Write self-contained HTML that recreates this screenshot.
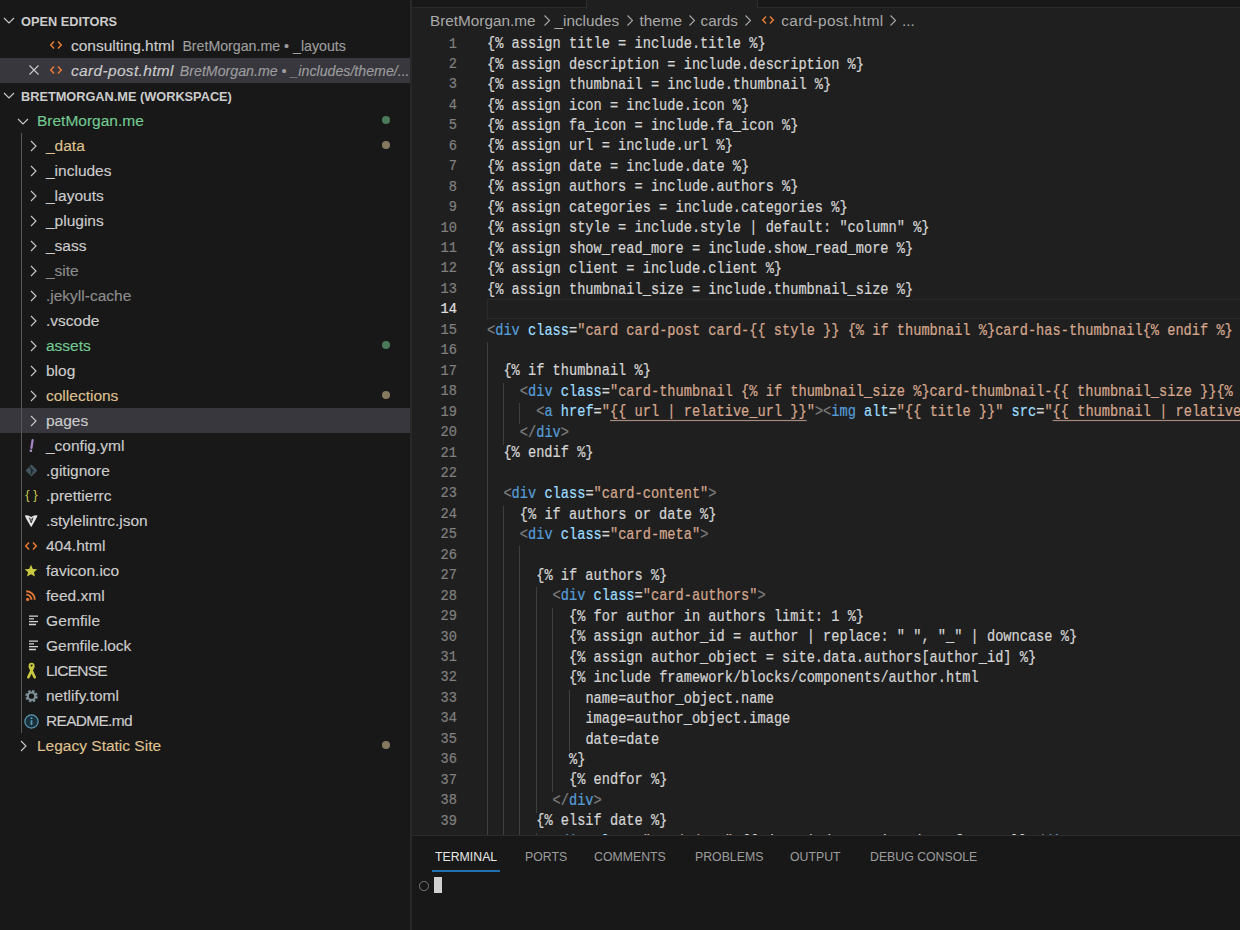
<!DOCTYPE html><html><head><meta charset="utf-8"><style>
*{margin:0;padding:0;box-sizing:border-box}
html,body{width:1240px;height:930px;overflow:hidden;background:#1f1f1f}
body{position:relative;font-family:"Liberation Sans",sans-serif}
#side{position:absolute;left:0;top:0;width:410px;height:930px;background:#181818;overflow:hidden}
#sideborder{position:absolute;left:410px;top:0;width:2px;height:930px;background:#282828}
.row{position:absolute;left:0;width:410px;height:25px}
.ic{position:absolute;overflow:visible}
.hd{position:absolute;top:0.5px;line-height:25px;font-size:12.75px;font-weight:bold;color:#cccccc;white-space:nowrap}
.tx{position:absolute;top:-0.5px;line-height:25px;font-size:15.5px;-webkit-text-stroke:0.15px currentColor;color:#cccccc;white-space:nowrap}
.desc{font-size:14.2px;color:#9d9d9d;margin-left:8px}
.bc{position:absolute;top:8px;height:26px;line-height:26px;font-size:15.3px;color:#a9a9a9;white-space:nowrap}
.dot{position:absolute;left:382px;top:8px;width:8px;height:8px;border-radius:50%}
#editor{position:absolute;left:412px;top:0;width:828px;height:835px;background:#1f1f1f;overflow:hidden}
.cl{position:absolute;height:20.45px;line-height:20.45px;font-family:"Liberation Mono",monospace;font-size:13.67px;white-space:pre;color:#d4d4d4;transform:scaleY(1.16);-webkit-text-stroke:0.2px currentColor}
.ln{position:absolute;left:412px;width:45px;text-align:right;height:20.45px;line-height:20.45px;font-family:"Liberation Mono",monospace;font-size:13.67px;transform:scaleY(1.12);-webkit-text-stroke:0.2px currentColor}
.ig{position:absolute;width:1.2px;height:20.95px;background:#404040}
#panel{position:absolute;left:412px;top:835px;width:828px;height:95px;background:#181818;border-top:1px solid #2b2b2b}
.pt{position:absolute;top:846.7px;line-height:20px;font-size:12.3px;color:#9d9d9d;white-space:nowrap}
</style></head><body>
<div id="side"><div class="row" style="top:8px;"><svg class="ic" style="left:2px;top:5px" width="14" height="14" viewBox="0 0 14 14"><path d="M2 5 L7 10 L12 5" fill="none" stroke="#cccccc" stroke-width="1.1"/></svg><span class="hd" style="left:21px">OPEN EDITORS</span></div><div class="row" style="top:33px;"><svg class="ic" style="left:49px;top:5px" width="14" height="14" viewBox="0 0 14 14"><path d="M5 3.5 L1.8 7 L5 10.5 M9 3.5 L12.2 7 L9 10.5" fill="none" stroke="#e37933" stroke-width="1.6"/></svg><span class="tx" style="left:71px;">consulting.html<span class="desc" style="">BretMorgan.me • _layouts</span></span></div><div class="row" style="top:58px;background:#37373d;"><svg class="ic" style="left:27px;top:5px" width="14" height="14" viewBox="0 0 14 14"><path d="M2.5 2.5 L11.5 11.5 M11.5 2.5 L2.5 11.5" stroke="#cccccc" stroke-width="1.1"/></svg><svg class="ic" style="left:49px;top:5px" width="14" height="14" viewBox="0 0 14 14"><path d="M5 3.5 L1.8 7 L5 10.5 M9 3.5 L12.2 7 L9 10.5" fill="none" stroke="#e37933" stroke-width="1.6"/></svg><span class="tx" style="left:71px;font-style:italic;letter-spacing:0.33px;">card-post.html<span class="desc" style="font-style:italic;letter-spacing:0;margin-left:6px;">BretMorgan.me • _includes/theme/...</span></span></div><div class="row" style="top:83px;"><svg class="ic" style="left:2px;top:5px" width="14" height="14" viewBox="0 0 14 14"><path d="M2 5 L7 10 L12 5" fill="none" stroke="#cccccc" stroke-width="1.1"/></svg><span class="hd" style="left:21px">BRETMORGAN.ME (WORKSPACE)</span></div><div class="row" style="top:108px;"><svg class="ic" style="left:16px;top:6px" width="14" height="14" viewBox="0 0 14 14"><path d="M2 5 L7 10 L12 5" fill="none" stroke="#cccccc" stroke-width="1.1"/></svg><span class="tx" style="left:37px;color:#73c991">BretMorgan.me</span><div class="dot" style="background:#4a7a5a"></div></div><div class="row" style="top:133px;"><svg class="ic" style="left:26px;top:6px" width="14" height="14" viewBox="0 0 14 14"><path d="M5 2 L10 7 L5 12" fill="none" stroke="#cccccc" stroke-width="1.1"/></svg><span class="tx" style="left:46px;color:#dfc08f">_data</span><div class="dot" style="background:#857a60"></div></div><div class="row" style="top:158px;"><svg class="ic" style="left:26px;top:6px" width="14" height="14" viewBox="0 0 14 14"><path d="M5 2 L10 7 L5 12" fill="none" stroke="#cccccc" stroke-width="1.1"/></svg><span class="tx" style="left:46px;color:#cccccc">_includes</span></div><div class="row" style="top:183px;"><svg class="ic" style="left:26px;top:6px" width="14" height="14" viewBox="0 0 14 14"><path d="M5 2 L10 7 L5 12" fill="none" stroke="#cccccc" stroke-width="1.1"/></svg><span class="tx" style="left:46px;color:#cccccc">_layouts</span></div><div class="row" style="top:208px;"><svg class="ic" style="left:26px;top:6px" width="14" height="14" viewBox="0 0 14 14"><path d="M5 2 L10 7 L5 12" fill="none" stroke="#cccccc" stroke-width="1.1"/></svg><span class="tx" style="left:46px;color:#cccccc">_plugins</span></div><div class="row" style="top:233px;"><svg class="ic" style="left:26px;top:6px" width="14" height="14" viewBox="0 0 14 14"><path d="M5 2 L10 7 L5 12" fill="none" stroke="#cccccc" stroke-width="1.1"/></svg><span class="tx" style="left:46px;color:#cccccc">_sass</span></div><div class="row" style="top:258px;"><svg class="ic" style="left:26px;top:6px" width="14" height="14" viewBox="0 0 14 14"><path d="M5 2 L10 7 L5 12" fill="none" stroke="#cccccc" stroke-width="1.1"/></svg><span class="tx" style="left:46px;color:#8c8c8c">_site</span></div><div class="row" style="top:283px;"><svg class="ic" style="left:26px;top:6px" width="14" height="14" viewBox="0 0 14 14"><path d="M5 2 L10 7 L5 12" fill="none" stroke="#cccccc" stroke-width="1.1"/></svg><span class="tx" style="left:46px;color:#8c8c8c">.jekyll-cache</span></div><div class="row" style="top:308px;"><svg class="ic" style="left:26px;top:6px" width="14" height="14" viewBox="0 0 14 14"><path d="M5 2 L10 7 L5 12" fill="none" stroke="#cccccc" stroke-width="1.1"/></svg><span class="tx" style="left:46px;color:#cccccc">.vscode</span></div><div class="row" style="top:333px;"><svg class="ic" style="left:26px;top:6px" width="14" height="14" viewBox="0 0 14 14"><path d="M5 2 L10 7 L5 12" fill="none" stroke="#cccccc" stroke-width="1.1"/></svg><span class="tx" style="left:46px;color:#73c991">assets</span><div class="dot" style="background:#4a7a5a"></div></div><div class="row" style="top:358px;"><svg class="ic" style="left:26px;top:6px" width="14" height="14" viewBox="0 0 14 14"><path d="M5 2 L10 7 L5 12" fill="none" stroke="#cccccc" stroke-width="1.1"/></svg><span class="tx" style="left:46px;color:#cccccc">blog</span></div><div class="row" style="top:383px;"><svg class="ic" style="left:26px;top:6px" width="14" height="14" viewBox="0 0 14 14"><path d="M5 2 L10 7 L5 12" fill="none" stroke="#cccccc" stroke-width="1.1"/></svg><span class="tx" style="left:46px;color:#dfc08f">collections</span><div class="dot" style="background:#857a60"></div></div><div class="row" style="top:408px;background:#37373d;"><svg class="ic" style="left:26px;top:6px" width="14" height="14" viewBox="0 0 14 14"><path d="M5 2 L10 7 L5 12" fill="none" stroke="#cccccc" stroke-width="1.1"/></svg><span class="tx" style="left:46px;color:#cccccc">pages</span></div><div class="row" style="top:433px;"><svg class="ic" style="left:24px;top:6px" width="14" height="14" viewBox="0 0 14 14"><path d="M8.6 1.2 L7.4 9" fill="none" stroke="#a888c8" stroke-width="2.2" stroke-linecap="round"/><circle cx="6.9" cy="11.7" r="1.3" fill="#b09ac8"/></svg><span class="tx" style="left:46px;letter-spacing:0">_config.yml</span></div><div class="row" style="top:458px;"><svg class="ic" style="left:24px;top:6px" width="14" height="14" viewBox="0 0 14 14"><path d="M7.5 0.6 L13.4 6.5 L7.5 12.4 L1.6 6.5 Z" fill="#42565f"/><path d="M5.5 3.2 L9.5 7.5 M7.5 5.2 V10" stroke="#1c262b" stroke-width="1.2"/><circle cx="7.5" cy="9.6" r="1" fill="#1c262b"/></svg><span class="tx" style="left:46px;letter-spacing:0">.gitignore</span></div><div class="row" style="top:483px;"><svg class="ic" style="left:24px;top:6px" width="14" height="14" viewBox="0 0 14 14"><text x="7.5" y="9.8" text-anchor="middle" font-family="Liberation Sans" font-size="13" fill="#c5c748">{ }</text></svg><span class="tx" style="left:46px;letter-spacing:0">.prettierrc</span></div><div class="row" style="top:508px;"><svg class="ic" style="left:24px;top:6px" width="14" height="14" viewBox="0 0 14 14"><path d="M0.8 1.5 Q3 0.8 5 1.8 L7.2 3 L9.4 1.8 Q11.5 0.8 13.6 1.5 L12 5 L7.2 13.2 L2.4 5 Z" fill="#e4e4e4"/><path d="M5.4 3.6 L7.2 8.8 L9 3.6" fill="none" stroke="#1a1a1a" stroke-width="0.9"/><circle cx="7.2" cy="5.2" r="0.6" fill="#1a1a1a"/></svg><span class="tx" style="left:46px;letter-spacing:0">.stylelintrc.json</span></div><div class="row" style="top:533px;"><svg class="ic" style="left:24px;top:6px" width="14" height="14" viewBox="0 0 14 14"><path d="M5 3.5 L1.8 7 L5 10.5 M9 3.5 L12.2 7 L9 10.5" fill="none" stroke="#e37933" stroke-width="1.6"/></svg><span class="tx" style="left:46px;letter-spacing:0">404.html</span></div><div class="row" style="top:558px;"><svg class="ic" style="left:24px;top:6px" width="14" height="14" viewBox="0 0 14 14"><path d="M7 0.8 L8.9 5 L13.3 5.3 L9.9 8.2 L11 12.6 L7 10.2 L3 12.6 L4.1 8.2 L0.7 5.3 L5.1 5 Z" fill="#cbcb41"/></svg><span class="tx" style="left:46px;letter-spacing:0">favicon.ico</span></div><div class="row" style="top:583px;"><svg class="ic" style="left:24px;top:6px" width="14" height="14" viewBox="0 0 14 14"><circle cx="3.6" cy="10.4" r="1.6" fill="#e37933"/><path d="M2.2 5.6 A5 5 0 0 1 7.4 10.8 M2.2 2.2 A8.5 8.5 0 0 1 10.8 10.8" fill="none" stroke="#e37933" stroke-width="1.9"/></svg><span class="tx" style="left:46px;letter-spacing:0">feed.xml</span></div><div class="row" style="top:608px;"><svg class="ic" style="left:24px;top:6px" width="14" height="14" viewBox="0 0 14 14"><path d="M5 2.2 H14 M5 4.9 H10 M5 7.7 H14 M5 10.5 H12" stroke="#d4d4d4" stroke-width="1.3"/></svg><span class="tx" style="left:46px;letter-spacing:0.1px">Gemfile</span></div><div class="row" style="top:633px;"><svg class="ic" style="left:24px;top:6px" width="14" height="14" viewBox="0 0 14 14"><path d="M5 2.2 H14 M5 4.9 H10 M5 7.7 H14 M5 10.5 H12" stroke="#d4d4d4" stroke-width="1.3"/></svg><span class="tx" style="left:46px;letter-spacing:0">Gemfile.lock</span></div><div class="row" style="top:658px;"><svg class="ic" style="left:24px;top:6px" width="14" height="14" viewBox="0 0 14 14"><ellipse cx="7.6" cy="1.6" rx="2.1" ry="1.9" fill="none" stroke="#c9c940" stroke-width="1.7"/><path d="M9.2 3 L4.4 13.2 M5.9 3 L10.7 13.2" stroke="#c9c940" stroke-width="2.7" stroke-linecap="round"/><path d="M5.6 3.2 L9.6 3.2 L7.6 7.5 Z" fill="#c9c940"/></svg><span class="tx" style="left:46px;letter-spacing:-0.8px">LICENSE</span></div><div class="row" style="top:683px;"><svg class="ic" style="left:24px;top:6px" width="14" height="14" viewBox="0 0 14 14"><circle cx="7.5" cy="7.2" r="4.9" fill="none" stroke="#7d8f95" stroke-width="2.6" stroke-dasharray="2.3 1.55"/><circle cx="7.5" cy="7.2" r="3.7" fill="none" stroke="#7d8f95" stroke-width="2.2"/></svg><span class="tx" style="left:46px;letter-spacing:0">netlify.toml</span></div><div class="row" style="top:708px;"><svg class="ic" style="left:24px;top:6px" width="14" height="14" viewBox="0 0 14 14"><circle cx="7.5" cy="7.5" r="6.6" fill="#17303c" stroke="#5d9ab5" stroke-width="1.2"/><circle cx="7.5" cy="4.3" r="1" fill="#5d9ab5"/><path d="M7.5 6.3 V11" stroke="#5d9ab5" stroke-width="1.7"/></svg><span class="tx" style="left:46px;letter-spacing:-0.7px">README.md</span></div><div class="row" style="top:733px;"><svg class="ic" style="left:16px;top:6px" width="14" height="14" viewBox="0 0 14 14"><path d="M5 2 L10 7 L5 12" fill="none" stroke="#cccccc" stroke-width="1.1"/></svg><span class="tx" style="left:37px;color:#dfc08f">Legacy Static Site</span><div class="dot" style="background:#857a60"></div></div><div style="position:absolute;left:20.6px;top:133px;width:1.6px;height:600px;background:#585858"></div></div>
<div id="sideborder"></div>

<div style="position:absolute;left:412px;top:0;width:828px;height:8px;background:#181818;border-bottom:1px solid #2b2b2b"></div>
<div style="position:absolute;left:586px;top:0;width:172px;height:8px;background:#1f1f1f;border-left:1px solid #2b2b2b;border-right:1px solid #2b2b2b"></div>

<div class="bc" style="left:430px">BretMorgan.me</div><svg class="ic" style="left:542.5px;top:14px" width="8" height="13" viewBox="0 0 8 13"><path d="M1.5 1.5 L6.5 6.5 L1.5 11.5" fill="none" stroke="#a9a9a9" stroke-width="1.1"/></svg><div class="bc" style="left:554.5px">_includes</div><svg class="ic" style="left:626px;top:14px" width="8" height="13" viewBox="0 0 8 13"><path d="M1.5 1.5 L6.5 6.5 L1.5 11.5" fill="none" stroke="#a9a9a9" stroke-width="1.1"/></svg><div class="bc" style="left:639.5px">theme</div><svg class="ic" style="left:688px;top:14px" width="8" height="13" viewBox="0 0 8 13"><path d="M1.5 1.5 L6.5 6.5 L1.5 11.5" fill="none" stroke="#a9a9a9" stroke-width="1.1"/></svg><div class="bc" style="left:700.5px">cards</div><svg class="ic" style="left:743.5px;top:14px" width="8" height="13" viewBox="0 0 8 13"><path d="M1.5 1.5 L6.5 6.5 L1.5 11.5" fill="none" stroke="#a9a9a9" stroke-width="1.1"/></svg><svg class="ic" style="left:760.5px;top:13px" width="14" height="14" viewBox="0 0 14 14"><path d="M5 3.5 L1.8 7 L5 10.5 M9 3.5 L12.2 7 L9 10.5" fill="none" stroke="#e37933" stroke-width="1.6"/></svg><div class="bc" style="left:781.3px;letter-spacing:0.38px">card-post.html</div><svg class="ic" style="left:889px;top:14px" width="8" height="13" viewBox="0 0 8 13"><path d="M1.5 1.5 L6.5 6.5 L1.5 11.5" fill="none" stroke="#a9a9a9" stroke-width="1.1"/></svg><div class="bc" style="left:902px">...</div>
<div class="cl" style="top:35.20px;left:487.00px"><span style="color:#d4d4d4">{% assign title = include.title %}</span></div><div class="ln" style="top:34.50px;color:#808080">1</div><div class="cl" style="top:55.65px;left:487.00px"><span style="color:#d4d4d4">{% assign description = include.description %}</span></div><div class="ln" style="top:54.95px;color:#808080">2</div><div class="cl" style="top:76.10px;left:487.00px"><span style="color:#d4d4d4">{% assign thumbnail = include.thumbnail %}</span></div><div class="ln" style="top:75.40px;color:#808080">3</div><div class="cl" style="top:96.55px;left:487.00px"><span style="color:#d4d4d4">{% assign icon = include.icon %}</span></div><div class="ln" style="top:95.85px;color:#808080">4</div><div class="cl" style="top:117.00px;left:487.00px"><span style="color:#d4d4d4">{% assign fa_icon = include.fa_icon %}</span></div><div class="ln" style="top:116.30px;color:#808080">5</div><div class="cl" style="top:137.45px;left:487.00px"><span style="color:#d4d4d4">{% assign url = include.url %}</span></div><div class="ln" style="top:136.75px;color:#808080">6</div><div class="cl" style="top:157.90px;left:487.00px"><span style="color:#d4d4d4">{% assign date = include.date %}</span></div><div class="ln" style="top:157.20px;color:#808080">7</div><div class="cl" style="top:178.35px;left:487.00px"><span style="color:#d4d4d4">{% assign authors = include.authors %}</span></div><div class="ln" style="top:177.65px;color:#808080">8</div><div class="cl" style="top:198.80px;left:487.00px"><span style="color:#d4d4d4">{% assign categories = include.categories %}</span></div><div class="ln" style="top:198.10px;color:#808080">9</div><div class="cl" style="top:219.25px;left:487.00px"><span style="color:#d4d4d4">{% assign style = include.style | default: "column" %}</span></div><div class="ln" style="top:218.55px;color:#808080">10</div><div class="cl" style="top:239.70px;left:487.00px"><span style="color:#d4d4d4">{% assign show_read_more = include.show_read_more %}</span></div><div class="ln" style="top:239.00px;color:#808080">11</div><div class="cl" style="top:260.15px;left:487.00px"><span style="color:#d4d4d4">{% assign client = include.client %}</span></div><div class="ln" style="top:259.45px;color:#808080">12</div><div class="cl" style="top:280.60px;left:487.00px"><span style="color:#d4d4d4">{% assign thumbnail_size = include.thumbnail_size %}</span></div><div class="ln" style="top:279.90px;color:#808080">13</div><div class="cl" style="top:301.05px;left:487.00px"></div><div class="ln" style="top:300.35px;color:#e0e0e0">14</div><div class="cl" style="top:321.50px;left:487.00px"><span style="color:#808080">&lt;</span><span style="color:#569cd6">div</span><span style="color:#d4d4d4"> </span><span style="color:#9cdcfe">class</span><span style="color:#d4d4d4">=</span><span style="color:#d4a68d">"card card-post card-{{ style }} {% if thumbnail %}card-has-thumbnail{% endif %}</span></div><div class="ln" style="top:320.80px;color:#808080">15</div><div class="cl" style="top:341.95px;left:503.40px"></div><div class="ln" style="top:341.25px;color:#808080">16</div><div class="ig" style="top:341.95px;left:486.50px"></div><div class="cl" style="top:362.40px;left:503.40px"><span style="color:#d4d4d4">{% if thumbnail %}</span></div><div class="ln" style="top:361.70px;color:#808080">17</div><div class="ig" style="top:362.40px;left:486.50px"></div><div class="cl" style="top:382.85px;left:519.80px"><span style="color:#808080">&lt;</span><span style="color:#569cd6">div</span><span style="color:#d4d4d4"> </span><span style="color:#9cdcfe">class</span><span style="color:#d4d4d4">=</span><span style="color:#d4a68d">"card-thumbnail {% if thumbnail_size %}card-thumbnail-{{ thumbnail_size }}{% endif %}"</span><span style="color:#808080">&gt;</span></div><div class="ln" style="top:382.15px;color:#808080">18</div><div class="ig" style="top:382.85px;left:486.50px"></div><div class="ig" style="top:382.85px;left:502.90px"></div><div class="cl" style="top:403.30px;left:536.20px"><span style="color:#808080">&lt;</span><span style="color:#569cd6">a</span><span style="color:#d4d4d4"> </span><span style="color:#9cdcfe">href</span><span style="color:#d4d4d4">=</span><span style="color:#d4a68d">"</span><span style="color:#d4a68d;text-decoration:underline;text-decoration-color:#a88a7c;text-underline-offset:3px">{{ url | relative_url }}</span><span style="color:#d4a68d">"</span><span style="color:#808080">&gt;&lt;</span><span style="color:#569cd6">img</span><span style="color:#d4d4d4"> </span><span style="color:#9cdcfe">alt</span><span style="color:#d4d4d4">=</span><span style="color:#d4a68d">"{{ title }}"</span><span style="color:#d4d4d4"> </span><span style="color:#9cdcfe">src</span><span style="color:#d4d4d4">=</span><span style="color:#d4a68d">"</span><span style="color:#d4a68d;text-decoration:underline;text-decoration-color:#a88a7c;text-underline-offset:3px">{{ thumbnail | relative_url }}</span><span style="color:#d4a68d">"</span><span style="color:#808080">&gt;&lt;/</span><span style="color:#569cd6">a</span><span style="color:#808080">&gt;</span></div><div class="ln" style="top:402.60px;color:#808080">19</div><div class="ig" style="top:403.30px;left:486.50px"></div><div class="ig" style="top:403.30px;left:502.90px"></div><div class="ig" style="top:403.30px;left:519.30px"></div><div class="cl" style="top:423.75px;left:519.80px"><span style="color:#808080">&lt;/</span><span style="color:#569cd6">div</span><span style="color:#808080">&gt;</span></div><div class="ln" style="top:423.05px;color:#808080">20</div><div class="ig" style="top:423.75px;left:486.50px"></div><div class="ig" style="top:423.75px;left:502.90px"></div><div class="cl" style="top:444.20px;left:503.40px"><span style="color:#d4d4d4">{% endif %}</span></div><div class="ln" style="top:443.50px;color:#808080">21</div><div class="ig" style="top:444.20px;left:486.50px"></div><div class="cl" style="top:464.65px;left:503.40px"></div><div class="ln" style="top:463.95px;color:#808080">22</div><div class="ig" style="top:464.65px;left:486.50px"></div><div class="cl" style="top:485.10px;left:503.40px"><span style="color:#808080">&lt;</span><span style="color:#569cd6">div</span><span style="color:#d4d4d4"> </span><span style="color:#9cdcfe">class</span><span style="color:#d4d4d4">=</span><span style="color:#d4a68d">"card-content"</span><span style="color:#808080">&gt;</span></div><div class="ln" style="top:484.40px;color:#808080">23</div><div class="ig" style="top:485.10px;left:486.50px"></div><div class="cl" style="top:505.55px;left:519.80px"><span style="color:#d4d4d4">{% if authors or date %}</span></div><div class="ln" style="top:504.85px;color:#808080">24</div><div class="ig" style="top:505.55px;left:486.50px"></div><div class="ig" style="top:505.55px;left:502.90px"></div><div class="cl" style="top:526.00px;left:519.80px"><span style="color:#808080">&lt;</span><span style="color:#569cd6">div</span><span style="color:#d4d4d4"> </span><span style="color:#9cdcfe">class</span><span style="color:#d4d4d4">=</span><span style="color:#d4a68d">"card-meta"</span><span style="color:#808080">&gt;</span></div><div class="ln" style="top:525.30px;color:#808080">25</div><div class="ig" style="top:526.00px;left:486.50px"></div><div class="ig" style="top:526.00px;left:502.90px"></div><div class="cl" style="top:546.45px;left:536.20px"></div><div class="ln" style="top:545.75px;color:#808080">26</div><div class="ig" style="top:546.45px;left:486.50px"></div><div class="ig" style="top:546.45px;left:502.90px"></div><div class="ig" style="top:546.45px;left:519.30px"></div><div class="cl" style="top:566.90px;left:536.20px"><span style="color:#d4d4d4">{% if authors %}</span></div><div class="ln" style="top:566.20px;color:#808080">27</div><div class="ig" style="top:566.90px;left:486.50px"></div><div class="ig" style="top:566.90px;left:502.90px"></div><div class="ig" style="top:566.90px;left:519.30px"></div><div class="cl" style="top:587.35px;left:552.60px"><span style="color:#808080">&lt;</span><span style="color:#569cd6">div</span><span style="color:#d4d4d4"> </span><span style="color:#9cdcfe">class</span><span style="color:#d4d4d4">=</span><span style="color:#d4a68d">"card-authors"</span><span style="color:#808080">&gt;</span></div><div class="ln" style="top:586.65px;color:#808080">28</div><div class="ig" style="top:587.35px;left:486.50px"></div><div class="ig" style="top:587.35px;left:502.90px"></div><div class="ig" style="top:587.35px;left:519.30px"></div><div class="ig" style="top:587.35px;left:535.70px"></div><div class="cl" style="top:607.80px;left:569.00px"><span style="color:#d4d4d4">{% for author in authors limit: 1 %}</span></div><div class="ln" style="top:607.10px;color:#808080">29</div><div class="ig" style="top:607.80px;left:486.50px"></div><div class="ig" style="top:607.80px;left:502.90px"></div><div class="ig" style="top:607.80px;left:519.30px"></div><div class="ig" style="top:607.80px;left:535.70px"></div><div class="ig" style="top:607.80px;left:552.10px"></div><div class="cl" style="top:628.25px;left:569.00px"><span style="color:#d4d4d4">{% assign author_id = author | replace: " ", "_" | downcase %}</span></div><div class="ln" style="top:627.55px;color:#808080">30</div><div class="ig" style="top:628.25px;left:486.50px"></div><div class="ig" style="top:628.25px;left:502.90px"></div><div class="ig" style="top:628.25px;left:519.30px"></div><div class="ig" style="top:628.25px;left:535.70px"></div><div class="ig" style="top:628.25px;left:552.10px"></div><div class="cl" style="top:648.70px;left:569.00px"><span style="color:#d4d4d4">{% assign author_object = site.data.authors[author_id] %}</span></div><div class="ln" style="top:648.00px;color:#808080">31</div><div class="ig" style="top:648.70px;left:486.50px"></div><div class="ig" style="top:648.70px;left:502.90px"></div><div class="ig" style="top:648.70px;left:519.30px"></div><div class="ig" style="top:648.70px;left:535.70px"></div><div class="ig" style="top:648.70px;left:552.10px"></div><div class="cl" style="top:669.15px;left:569.00px"><span style="color:#d4d4d4">{% include framework/blocks/components/author.html</span></div><div class="ln" style="top:668.45px;color:#808080">32</div><div class="ig" style="top:669.15px;left:486.50px"></div><div class="ig" style="top:669.15px;left:502.90px"></div><div class="ig" style="top:669.15px;left:519.30px"></div><div class="ig" style="top:669.15px;left:535.70px"></div><div class="ig" style="top:669.15px;left:552.10px"></div><div class="cl" style="top:689.60px;left:585.40px"><span style="color:#d4d4d4">name=author_object.name</span></div><div class="ln" style="top:688.90px;color:#808080">33</div><div class="ig" style="top:689.60px;left:486.50px"></div><div class="ig" style="top:689.60px;left:502.90px"></div><div class="ig" style="top:689.60px;left:519.30px"></div><div class="ig" style="top:689.60px;left:535.70px"></div><div class="ig" style="top:689.60px;left:552.10px"></div><div class="ig" style="top:689.60px;left:568.50px"></div><div class="cl" style="top:710.05px;left:585.40px"><span style="color:#d4d4d4">image=author_object.image</span></div><div class="ln" style="top:709.35px;color:#808080">34</div><div class="ig" style="top:710.05px;left:486.50px"></div><div class="ig" style="top:710.05px;left:502.90px"></div><div class="ig" style="top:710.05px;left:519.30px"></div><div class="ig" style="top:710.05px;left:535.70px"></div><div class="ig" style="top:710.05px;left:552.10px"></div><div class="ig" style="top:710.05px;left:568.50px"></div><div class="cl" style="top:730.50px;left:585.40px"><span style="color:#d4d4d4">date=date</span></div><div class="ln" style="top:729.80px;color:#808080">35</div><div class="ig" style="top:730.50px;left:486.50px"></div><div class="ig" style="top:730.50px;left:502.90px"></div><div class="ig" style="top:730.50px;left:519.30px"></div><div class="ig" style="top:730.50px;left:535.70px"></div><div class="ig" style="top:730.50px;left:552.10px"></div><div class="ig" style="top:730.50px;left:568.50px"></div><div class="cl" style="top:750.95px;left:569.00px"><span style="color:#d4d4d4">%}</span></div><div class="ln" style="top:750.25px;color:#808080">36</div><div class="ig" style="top:750.95px;left:486.50px"></div><div class="ig" style="top:750.95px;left:502.90px"></div><div class="ig" style="top:750.95px;left:519.30px"></div><div class="ig" style="top:750.95px;left:535.70px"></div><div class="ig" style="top:750.95px;left:552.10px"></div><div class="cl" style="top:771.40px;left:569.00px"><span style="color:#d4d4d4">{% endfor %}</span></div><div class="ln" style="top:770.70px;color:#808080">37</div><div class="ig" style="top:771.40px;left:486.50px"></div><div class="ig" style="top:771.40px;left:502.90px"></div><div class="ig" style="top:771.40px;left:519.30px"></div><div class="ig" style="top:771.40px;left:535.70px"></div><div class="ig" style="top:771.40px;left:552.10px"></div><div class="cl" style="top:791.85px;left:552.60px"><span style="color:#808080">&lt;/</span><span style="color:#569cd6">div</span><span style="color:#808080">&gt;</span></div><div class="ln" style="top:791.15px;color:#808080">38</div><div class="ig" style="top:791.85px;left:486.50px"></div><div class="ig" style="top:791.85px;left:502.90px"></div><div class="ig" style="top:791.85px;left:519.30px"></div><div class="ig" style="top:791.85px;left:535.70px"></div><div class="cl" style="top:812.30px;left:536.20px"><span style="color:#d4d4d4">{% elsif date %}</span></div><div class="ln" style="top:811.60px;color:#808080">39</div><div class="ig" style="top:812.30px;left:486.50px"></div><div class="ig" style="top:812.30px;left:502.90px"></div><div class="ig" style="top:812.30px;left:519.30px"></div><div class="cl" style="top:832.75px;left:552.60px"><span style="color:#808080">&lt;</span><span style="color:#569cd6">div</span><span style="color:#d4d4d4"> </span><span style="color:#9cdcfe">class</span><span style="color:#d4d4d4">=</span><span style="color:#d4a68d">"card-date"</span><span style="color:#808080">&gt;</span><span style="color:#d4d4d4">{{ date | date: site.date_format }}</span><span style="color:#808080">&lt;/</span><span style="color:#569cd6">div</span><span style="color:#808080">&gt;</span></div><div class="ln" style="top:832.05px;color:#808080">40</div><div class="ig" style="top:832.75px;left:486.50px"></div><div class="ig" style="top:832.75px;left:502.90px"></div><div class="ig" style="top:832.75px;left:519.30px"></div><div class="ig" style="top:832.75px;left:535.70px"></div>
<div style="position:absolute;left:486.5px;top:299px;width:760px;height:20px;border:1.8px solid #2a2a2a"></div>
<div id="panel"></div>
<div class="pt" style="left:435px;color:#e7e7e7">TERMINAL</div>
<div style="position:absolute;left:432px;top:870px;width:68px;height:1.8px;background:#2170b0"></div>
<div class="pt" style="left:525px">PORTS</div>
<div class="pt" style="left:594px">COMMENTS</div>
<div class="pt" style="left:695px">PROBLEMS</div>
<div class="pt" style="left:790px">OUTPUT</div>
<div class="pt" style="left:870px">DEBUG CONSOLE</div>
<div style="position:absolute;left:419px;top:881px;width:9.5px;height:9.5px;border-radius:50%;border:1.8px solid #7a7a7a"></div>
<div style="position:absolute;left:434px;top:877px;width:8px;height:16px;background:#d0d0d0"></div>
</body></html>
